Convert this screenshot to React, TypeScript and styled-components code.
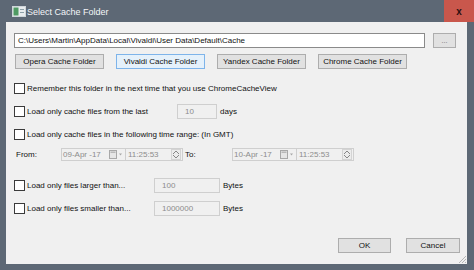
import styled, { createGlobalStyle } from 'styled-components'

const Global = createGlobalStyle`
  html, body { margin: 0; padding: 0; background: #5d6875; }
  body { font-family: "Liberation Sans", sans-serif; }
`

const Frame = styled.div`
  width: 474px;
  height: 270px;
  background: #5d6875;
  display: flex;
  flex-direction: column;
  position: relative;
  overflow: hidden;
`

const TitleBar = styled.div`
  height: 22px;
  display: flex;
  align-items: center;
  padding-left: 12px;
  color: #f4f6f8;
  font-family: "Liberation Sans", sans-serif;
  font-size: 9px;
`

const TitleText = styled.span`
  margin-left: 1px;
  margin-top: 1px;
  flex: 1;
`

const CloseBtn = styled.div`
  width: 30px;
  height: 22px;
  background: #c9574c;
  display: flex;
  align-items: center;
  justify-content: center;
  color: #2a1010;
  font-family: "Liberation Sans", sans-serif;
  font-weight: bold;
  font-size: 10px;
`

const Client = styled.div`
  flex: 1;
  margin: 0 7px 6px 6px;
  background: #f0f0f0;
  display: flex;
  flex-direction: column;
  padding: 11px 0 0 8px;
  font-family: "Liberation Sans", sans-serif;
  font-size: 8px;
  color: #111;
  position: relative;
`

const PathRow = styled.div`
  display: flex;
  align-items: center;
  height: 15px;
`

const PathInput = styled.div`
  width: 411px;
  height: 15px;
  box-sizing: border-box;
  background: #fff;
  border: 1px solid #8a8a8a;
  padding-left: 3px;
  display: flex;
  align-items: center;
  white-space: nowrap;
`

const Button = styled.div<{ $hot?: boolean; $w?: number }>`
  width: ${p => p.$w ?? 89}px;
  height: 15px;
  box-sizing: border-box;
  background: ${p => (p.$hot ? '#e5f1fb' : '#e1e1e1')};
  border: 1px solid ${p => (p.$hot ? '#7eb4ea' : '#adadad')};
  display: flex;
  align-items: center;
  justify-content: center;
  white-space: nowrap;
`

const BrowseBtn = styled(Button)`
  margin-left: 8px;
  color: #666;
  font-size: 7px;
`

const BtnRow = styled.div`
  display: flex;
  gap: 12px;
  margin-top: 6px;
  padding-left: 1px;
`

const CheckRow = styled.div<{ $top: number }>`
  display: flex;
  align-items: center;
  height: 15px;
  margin-top: ${p => p.$top}px;
`

const Box = styled.div`
  width: 11px;
  height: 11px;
  box-sizing: border-box;
  border: 1px solid #3a3a3a;
  background: #fff;
  margin-right: 2px;
`

const Label = styled.span<{ $w?: number }>`
  white-space: nowrap;
  ${p => (p.$w ? `width: ${p.$w}px;` : '')}
`

const DisabledInput = styled.div<{ $w: number }>`
  width: ${p => p.$w}px;
  height: 15px;
  box-sizing: border-box;
  border: 1px solid #cfcfcf;
  background: #f0f0f0;
  color: #8c8c8c;
  padding-left: 7px;
  display: flex;
  align-items: center;
  margin-right: 3px;
`

const RangeRow = styled.div`
  display: flex;
  align-items: center;
  height: 13px;
  margin-top: 6px;
  padding-left: 2px;
  white-space: nowrap;
`

const FromLabel = styled.span`
  width: 45px;
`

const ToLabel = styled.span`
  width: 47px;
  margin-left: 2px;
`

const DateBox = styled.div`
  width: 64px;
  height: 13px;
  box-sizing: border-box;
  border: 1px solid #cfcfcf;
  border-right: none;
  color: #8c8c8c;
  display: flex;
  align-items: center;
  padding-left: 1px;
`

const DateText = styled.span`
  flex: 1;
`

const TimeBox = styled.div`
  width: 58px;
  height: 13px;
  box-sizing: border-box;
  border: 1px solid #cfcfcf;
  color: #8c8c8c;
  display: flex;
  align-items: center;
  padding-left: 2px;
`

const Spin = styled.div`
  width: 10px;
  height: 11px;
  box-sizing: border-box;
  border: 1px solid #d4d4d4;
  background: #ececec;
  display: flex;
  flex-direction: column;
  align-items: center;
  justify-content: space-around;
  margin-right: 1px;
`

const Footer = styled.div`
  margin-top: auto;
  margin-bottom: 11px;
  display: flex;
  justify-content: flex-end;
  gap: 15px;
  padding-right: 7px;
`

const Grip = styled.svg`
  position: absolute;
  right: 0;
  bottom: 0;
`

const CalIcon = () => (
  <svg width="14" height="9" viewBox="0 0 14 9" style={{ marginRight: 2 }}>
    <rect x="0.5" y="0.5" width="7" height="8" fill="#e6e6e6" stroke="#a8a8a8" />
    <rect x="1.5" y="1.5" width="5" height="1.5" fill="#b8b8b8" />
    <path d="M10 3.5 L13 3.5 L11.5 5.5 Z" fill="#a8a8a8" />
  </svg>
)

const SpinButton = () => (
  <Spin>
    <svg width="6" height="3" viewBox="0 0 6 3"><path d="M0 3 L3 0 L6 3" fill="none" stroke="#888" /></svg>
    <svg width="6" height="3" viewBox="0 0 6 3"><path d="M0 0 L3 3 L6 0" fill="none" stroke="#888" /></svg>
  </Spin>
)

const AppIcon = () => (
  <svg width="14" height="11" viewBox="0 0 14 11">
    <rect x="0.5" y="0.5" width="13" height="10" fill="#e8ecee" stroke="#cfd6da" />
    <rect x="1.5" y="1.5" width="5" height="8" fill="#4f9a63" />
    <rect x="8" y="3" width="4" height="1" fill="#8da0a8" />
    <rect x="8" y="6" width="4" height="1" fill="#8da0a8" />
  </svg>
)

const Checked = ({ top, children }: { top: number; children: React.ReactNode }) => (
  <CheckRow $top={top}>
    <Box />
    {children}
  </CheckRow>
)

export default function App() {
  return (
    <Frame>
      <Global />
      <TitleBar>
        <AppIcon />
        <TitleText>Select Cache Folder</TitleText>
        <CloseBtn>x</CloseBtn>
      </TitleBar>
      <Client>
        <PathRow>
          <PathInput>C:\Users\Martin\AppData\Local\Vivaldi\User Data\Default\Cache</PathInput>
          <BrowseBtn $w={23}>...</BrowseBtn>
        </PathRow>
        <BtnRow>
          <Button>Opera Cache Folder</Button>
          <Button $hot>Vivaldi Cache Folder</Button>
          <Button>Yandex Cache Folder</Button>
          <Button>Chrome Cache Folder</Button>
        </BtnRow>
        <Checked top={12}>
          <Label>Remember this folder in the next time that you use ChromeCacheView</Label>
        </Checked>
        <Checked top={8}>
          <Label $w={150}>Load only cache files from the last</Label>
          <DisabledInput $w={40}>10</DisabledInput>
          <Label>days</Label>
        </Checked>
        <Checked top={8}>
          <Label>Load only cache files in the following time range: (In GMT)</Label>
        </Checked>
        <RangeRow>
          <FromLabel>From:</FromLabel>
          <DateBox>
            <DateText>09-Apr -17</DateText>
            <CalIcon />
          </DateBox>
          <TimeBox>
            <DateText>11:25:53</DateText>
            <SpinButton />
          </TimeBox>
          <ToLabel>To:</ToLabel>
          <DateBox>
            <DateText>10-Apr -17</DateText>
            <CalIcon />
          </DateBox>
          <TimeBox>
            <DateText>11:25:53</DateText>
            <SpinButton />
          </TimeBox>
        </RangeRow>
        <Checked top={17}>
          <Label $w={127}>Load only files larger than...</Label>
          <DisabledInput $w={66}>100</DisabledInput>
          <Label>Bytes</Label>
        </Checked>
        <Checked top={8}>
          <Label $w={127}>Load only files smaller than...</Label>
          <DisabledInput $w={66}>1000000</DisabledInput>
          <Label>Bytes</Label>
        </Checked>
        <Footer>
          <Button $w={53}>OK</Button>
          <Button $w={54}>Cancel</Button>
        </Footer>
        <Grip width="9" height="9" viewBox="0 0 9 9">
          <path d="M8 1 L1 8 M8 4 L4 8 M8 7 L7 8" stroke="#b5b5b5" strokeWidth="1" />
        </Grip>
      </Client>
    </Frame>
  )
}
